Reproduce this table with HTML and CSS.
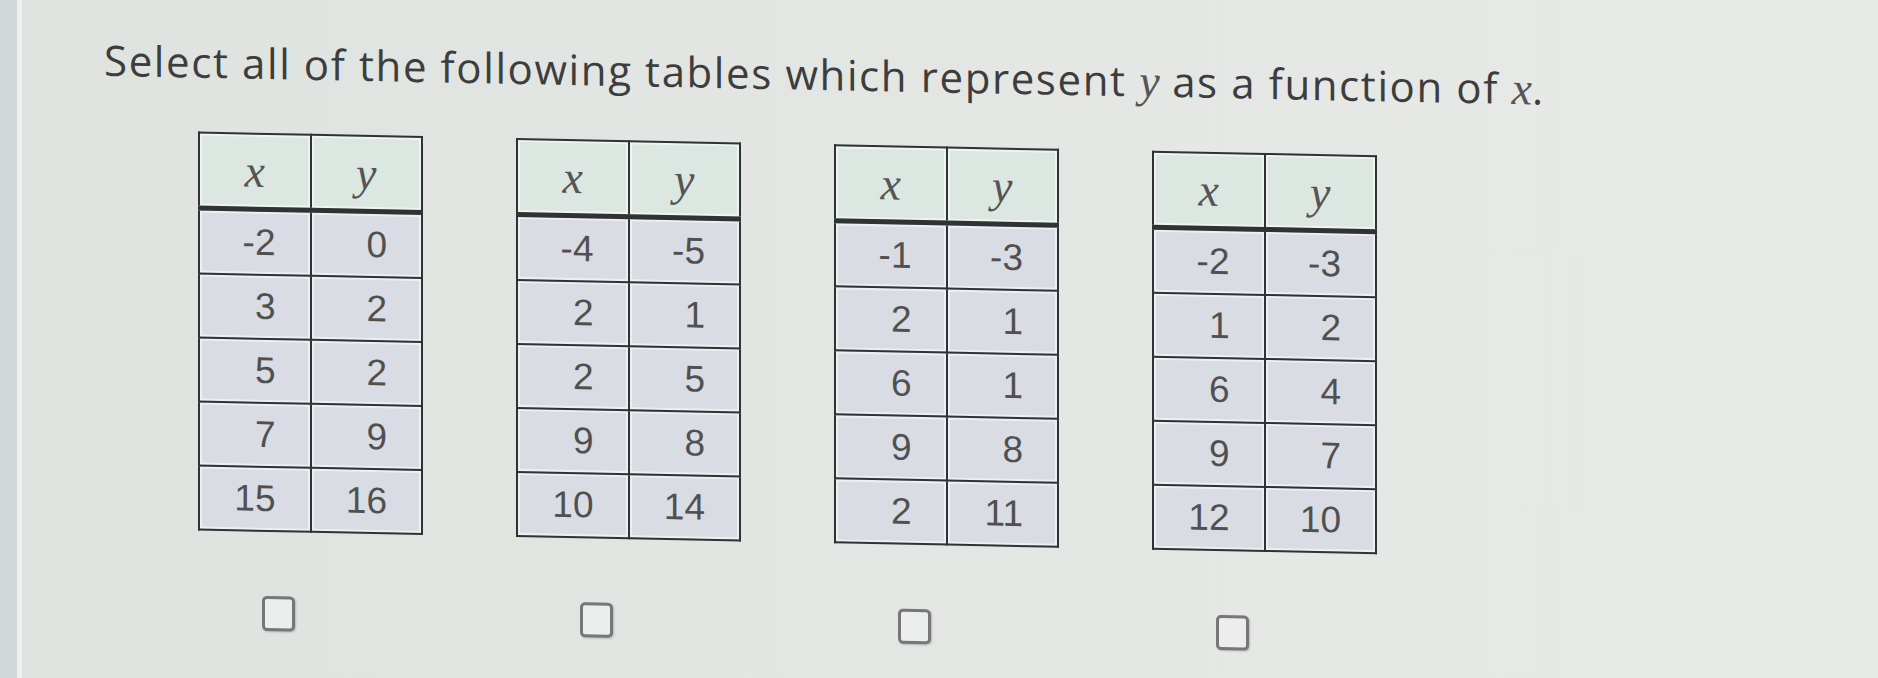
FILE: index.html
```html
<!DOCTYPE html>
<html lang="en">
<head>
    <meta charset="UTF-8">
    <meta name="viewport" content="width=device-width, initial-scale=1.0">
    <title>Functions from tables</title>
    <link rel="stylesheet" href="styles.css">
</head>
<body>
    <div class="screen">
        <div class="bezel"></div>

        <main class="question">
            <p class="prompt">Select all of the following tables which represent <i class="var">y</i> as a function of <i class="var">x</i>.</p>

            <div class="choices">
                <div class="choice">
                    <table class="fn-table">
                        <tr><th><i class="var">x</i></th><th><i class="var">y</i></th></tr>
                        <tr><td>-2</td><td>0</td></tr>
                        <tr><td>3</td><td>2</td></tr>
                        <tr><td>5</td><td>2</td></tr>
                        <tr><td>7</td><td>9</td></tr>
                        <tr><td>15</td><td>16</td></tr>
                    </table>
                    <span class="checkbox"></span>
                </div>

                <div class="choice">
                    <table class="fn-table">
                        <tr><th><i class="var">x</i></th><th><i class="var">y</i></th></tr>
                        <tr><td>-4</td><td>-5</td></tr>
                        <tr><td>2</td><td>1</td></tr>
                        <tr><td>2</td><td>5</td></tr>
                        <tr><td>9</td><td>8</td></tr>
                        <tr><td>10</td><td>14</td></tr>
                    </table>
                    <span class="checkbox"></span>
                </div>

                <div class="choice">
                    <table class="fn-table">
                        <tr><th><i class="var">x</i></th><th><i class="var">y</i></th></tr>
                        <tr><td>-1</td><td>-3</td></tr>
                        <tr><td>2</td><td>1</td></tr>
                        <tr><td>6</td><td>1</td></tr>
                        <tr><td>9</td><td>8</td></tr>
                        <tr><td>2</td><td>11</td></tr>
                    </table>
                    <span class="checkbox"></span>
                </div>

                <div class="choice">
                    <table class="fn-table">
                        <tr><th><i class="var">x</i></th><th><i class="var">y</i></th></tr>
                        <tr><td>-2</td><td>-3</td></tr>
                        <tr><td>1</td><td>2</td></tr>
                        <tr><td>6</td><td>4</td></tr>
                        <tr><td>9</td><td>7</td></tr>
                        <tr><td>12</td><td>10</td></tr>
                    </table>
                    <span class="checkbox"></span>
                </div>
            </div>
        </main>
    </div>
</body>
</html>
```

FILE: styles.css
```css
/* General Styles */
body {
    margin: 0;
    padding: 0;
    font-family: "Open Sans", "Liberation Sans", sans-serif;
    color: #333;
    background: linear-gradient(90deg, #dfe3e0 0%, #e4e7e4 60%, #e8eae8 100%);
}

.screen {
    display: flex;
    height: 100vh;
    overflow: hidden;
}

/* dark strip on the left edge of the photo */
.bezel {
    width: 17px;
    flex-shrink: 0;
    background-color: #d2d7d9;
    border-right: 5px solid #eef0ee;
}

/* Question */
.question {
    flex: 1;
    padding-left: 82px;
    transform: skewY(1.15deg); /* the photo was taken at a slight angle */
    transform-origin: 0 0;
}

.prompt {
    margin: 33px 0 0;
    font-size: 42px;
    line-height: 50px;
    letter-spacing: 1.6px;
    color: #3d3d3d;
}

.var {
    font-family: "Liberation Serif", serif;
    font-style: italic;
    font-size: 1.1em;
    letter-spacing: 0;
    color: #555;
}

.choices {
    display: flex;
    gap: 93px;
    padding-left: 94px;
    margin-top: 44px;
}

.choice {
    display: flex;
    flex-direction: column;
}

/* Tables */
.fn-table {
    width: 225px;
    border-collapse: collapse;
    border: 2px solid #2f3333;
}

.fn-table th,
.fn-table td {
    width: 50%;
    border: 2px solid #2f3333;
    box-shadow: inset 0 0 0 2px rgba(255, 255, 255, 0.55);
}

.fn-table th {
    height: 70px;
    background-color: #dce7e1;
    border-bottom-width: 5px;
    font-weight: normal;
    font-size: 40px;
    text-align: center;
}

.fn-table th .var {
    font-size: 46px;
}

.fn-table td {
    height: 62px;
    padding: 0 34px 0 0;
    background-color: #d9dce3;
    text-align: right;
    font-family: "Liberation Sans", sans-serif;
    font-size: 37px;
    color: #505050;
}

/* Checkboxes */
.checkbox {
    width: 27px;
    height: 29px;
    margin: 64px 0 0 64px;
    border: 3px solid #777;
    border-radius: 5px;
    background-color: #eceeed;
    box-shadow: 1px 1px 2px rgba(0, 0, 0, 0.2);
}
```
